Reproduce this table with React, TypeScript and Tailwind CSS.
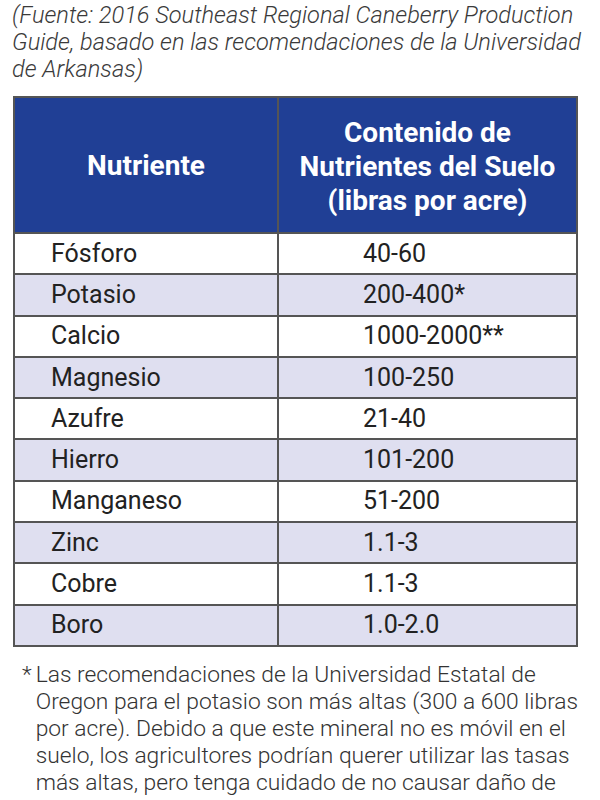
const rows = [
  ["Fósforo", "40-60"],
  ["Potasio", "200-400*"],
  ["Calcio", "1000-2000**"],
  ["Magnesio", "100-250"],
  ["Azufre", "21-40"],
  ["Hierro", "101-200"],
  ["Manganeso", "51-200"],
  ["Zinc", "1.1-3"],
  ["Cobre", "1.1-3"],
  ["Boro", "1.0-2.0"],
];

export default function App() {
  return (
    <div className="h-[800px] w-[600px] overflow-hidden bg-white font-['Roboto',sans-serif]">
      {/* Fuente */}
      <p className="pl-3 pr-[2px] pt-[2px] text-[23.6px] font-light italic leading-[27px] text-[#3a3a3a]">
        (Fuente: 2016 Southeast Regional Caneberry Production Guide, basado en las recomendaciones de la Universidad de Arkansas)
      </p>

      {/* Tabla */}
      <table className="ml-[13px] mt-[13px] w-[565px] border-collapse border-2 border-[#555]">
        <thead>
          <tr className="h-[136px] bg-[#203f95] text-white">
            <th className="w-[264px] border-2 border-[#555] pt-[2px] text-[28px] font-bold">Nutriente</th>
            <th className="border-2 border-[#555] pt-[3px] text-[28px] font-bold leading-[34px]">
              Contenido de
              <br />
              Nutrientes del Suelo
              <br />
              (libras por acre)
            </th>
          </tr>
        </thead>
        <tbody>
          {rows.map(([name, value], i) => (
            <tr key={name} className={i % 2 === 1 ? "h-[41.3px] bg-[#dfdff0]" : "h-[41.3px] bg-white"}>
              <td className="border-2 border-[#555] pl-[36px] text-[25px] leading-[30px] text-[#222]">{name}</td>
              <td className="border-2 border-[#555] pl-[84px] text-[25px] leading-[30px] text-[#222]">{value}</td>
            </tr>
          ))}
        </tbody>
      </table>

      {/* Nota */}
      <div className="mt-[14px] flex gap-[4px] pl-[22px] pr-3 text-[22.8px] font-light leading-[27px] text-[#333]">
        <span>*</span>
        <p>
          Las recomendaciones de la Universidad Estatal de Oregon para el potasio son más altas (300 a 600 libras por acre). Debido a que este mineral no es móvil en el suelo, los agricultores podrían querer utilizar las tasas más altas, pero tenga cuidado de no causar daño de sal a las raíces de las plantas jóvenes.
        </p>
      </div>
    </div>
  );
}
